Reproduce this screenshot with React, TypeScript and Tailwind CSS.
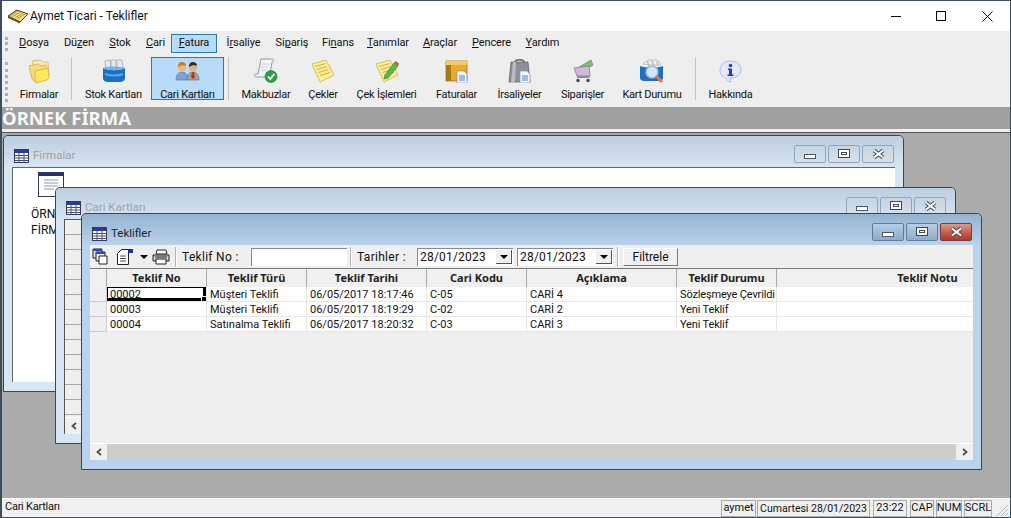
import type { ReactNode } from "react";

const menuItems: { pre: string; key: string; post: string; width: string; active?: boolean }[] = [
  { pre: "", key: "D", post: "osya", width: "w-[48px]" },
  { pre: "Dü", key: "z", post: "en", width: "w-[42px]" },
  { pre: "", key: "S", post: "tok", width: "w-[40px]" },
  { pre: "", key: "C", post: "ari", width: "w-[31px]" },
  { pre: "", key: "F", post: "atura", width: "w-[46px]", active: true },
  { pre: "İ", key: "r", post: "saliye", width: "w-[53px]" },
  { pre: "Si", key: "p", post: "ariş", width: "w-[44px]" },
  { pre: "Fi", key: "n", post: "ans", width: "w-[48px]" },
  { pre: "", key: "T", post: "anımlar", width: "w-[52px]" },
  { pre: "", key: "A", post: "raçlar", width: "w-[52px]" },
  { pre: "", key: "P", post: "encere", width: "w-[51px]" },
  { pre: "", key: "Y", post: "ardım", width: "w-[51px]" },
];

function FolderIcon() {
  return (
    <svg width="24" height="26" viewBox="0 0 24 26">
      <path d="M5 3l9-1 2 2 5 0 1 14-14 1z" fill="#fbe9a6" stroke="#c9b36a" strokeWidth=".7" />
      <path d="M2 8l9-2 2 2 6-1 2 14-13 3-3-3z" fill="#f8da7c" stroke="#c5a850" strokeWidth=".7" />
      <path d="M8 13l13-3 1 10-2 2-11 3-1-3z" fill="#fde95e" stroke="#c7a93a" strokeWidth=".7" />
    </svg>
  );
}

function StockIcon() {
  return (
    <svg width="24" height="24" viewBox="0 0 24 24">
      <path d="M3 2l5-1 1 8-5 1zM9 1h5v8H9zM15 1h5l1 8h-6z" fill="#e6eaf0" stroke="#98a2b2" strokeWidth=".7" />
      <path d="M1 9c5 3 17 3 22 0v10c0 3-3 4-5 4H6c-2 0-5-1-5-4z" fill="#1b6fc4" />
      <path d="M1 9c5-2 17-2 22 0-5 3-17 3-22 0z" fill="#74b4ea" />
      <path d="M3 15c5 2 13 2 18 0" stroke="#5ea5e5" strokeWidth="2" fill="none" />
    </svg>
  );
}

function PeopleIcon() {
  return (
    <svg width="25" height="20" viewBox="0 0 25 20">
      <path d="M1 19c0-6 3-8 6-8s6 2 6 8z" fill="#7da4d8" stroke="#4b70a5" strokeWidth=".6" />
      <circle cx="7" cy="6.500" r="4" fill="#eeb77e" />
      <path d="M3 6c0-4 2-5 4-5s4 1 4 4c-2-1-5-1-8 1z" fill="#c77a2c" />
      <path d="M12 19c0-6 3-8 6-8s6 2 6 8z" fill="#a0a39a" stroke="#6b6e66" strokeWidth=".6" />
      <path d="M17 11h2l1 5-2 2-2-2z" fill="#b5342c" />
      <circle cx="18" cy="6.500" r="4" fill="#e9b084" />
      <path d="M14 6c0-4 2-5 4-5s4 1 4 4c-2-1-5-1-8 1z" fill="#3c2c20" />
    </svg>
  );
}

function ReceiptIcon() {
  return (
    <svg width="24" height="26" viewBox="0 0 24 26">
      <path d="M7 1h11c2 0 2 3 0 3l-2 12c0 2-2 3-4 3H2c-2 0-2-3 0-3h2z" fill="#f2f3f6" stroke="#7d8391" strokeWidth=".8" />
      <path d="M8 6h7M7 9h7M7 12h6" stroke="#c2c6cf" strokeWidth=".8" />
      <circle cx="17" cy="18.500" r="6" fill="#2ba042" stroke="#1b6f2a" strokeWidth=".6" />
      <path d="M14 18.500l2.300 2.500 4-5" stroke="#fff" strokeWidth="1.800" fill="none" />
    </svg>
  );
}

function NoteIcon({ pencil }: { pencil?: boolean }) {
  return (
    <svg width="24" height="24" viewBox="0 0 24 24">
      <path d="M1 5l14-4 8 15-14 7z" fill="#fcee94" stroke="#d0b44a" strokeWidth=".8" />
      <path d="M4.500 7.500l10-3M6 10.500l10-3M7.500 13.500l10-3M9 16.500l10-3" stroke="#c8a93e" strokeWidth=".9" />
      {pencil && (
        <>
          <path d="M10 16L19 4l4 3-10 12-4 1z" fill="#58b947" stroke="#2c7b2c" strokeWidth=".6" />
          <path d="M19 4l1.500-2 3.500 2.500-1 2.500z" fill="#d9503f" />
        </>
      )}
    </svg>
  );
}

function DocOverlay() {
  return (
    <>
      <path d="M12 12h7l3 3v9H12z" fill="#f3f6fb" stroke="#7f93b5" strokeWidth=".7" />
      <path d="M14 16h6v6h-6z" fill="#9fbde2" />
    </>
  );
}

function InvoiceIcon() {
  return (
    <svg width="24" height="24" viewBox="0 0 24 24">
      <path d="M1 2h21v20H1z" fill="#e8a92e" stroke="#8f6414" strokeWidth=".7" />
      <path d="M1 2h21v4H1z" fill="#f6cc62" />
      <path d="M1 6h5v16H1z" fill="#a87718" />
      <DocOverlay />
    </svg>
  );
}

function BagIcon() {
  return (
    <svg width="24" height="24" viewBox="0 0 24 24">
      <path d="M7 3c0-3 9-3 9 0" stroke="#666" strokeWidth="1.500" fill="none" />
      <path d="M3 3h17l2 20H1z" fill="#8d8f92" stroke="#5a5c60" strokeWidth=".7" />
      <path d="M5 3h3l-1 20H3z" fill="#b9bbbe" />
      <DocOverlay />
    </svg>
  );
}

function CartIcon() {
  return (
    <svg width="22" height="24" viewBox="0 0 22 24">
      <path d="M7 8l12-7 2 5-10 6z" fill="#7fbf6a" stroke="#4b8a3f" strokeWidth=".6" />
      <path d="M2 9l15-2 1 10H5z" fill="#d9b7dc" stroke="#7d7f92" strokeWidth=".8" />
      <path d="M5 17h13l-1 2H5z" fill="#8b8f9c" />
      <circle cx="6" cy="21.500" r="1.800" fill="#4d505a" />
      <circle cx="16" cy="21.500" r="1.800" fill="#4d505a" />
    </svg>
  );
}

function CardSearchIcon() {
  return (
    <svg width="24" height="24" viewBox="0 0 24 24">
      <path d="M3 5l4-3 2 4zM8 1h4v5H8zM13 1h4v5h-4zM18 2l3 3-3 2z" fill="#eef0f4" stroke="#9aa3b2" strokeWidth=".6" />
      <path d="M0 7c6 2 17 2 23 0v12c0 2-2 3-4 3H4c-2 0-4-1-4-3z" fill="#1c6fc2" />
      <circle cx="12" cy="13" r="6" fill="#d3e6f7" stroke="#9fb6cc" strokeWidth="1.500" />
      <path d="M16 17l6 6" stroke="#e07b3b" strokeWidth="3" />
    </svg>
  );
}

function InfoIcon() {
  return (
    <svg width="23" height="23" viewBox="0 0 23 23">
      <path d="M11.500 1C5 1 1 5 1 10c0 4 2 7 6 8 1 2 2 4 5 4-1-1-1-3-1-4 6 0 11-3 11-8S18 1 11.500 1z" fill="#e3e8fb" stroke="#a3aee0" strokeWidth=".8" />
      <circle cx="11.500" cy="5.500" r="1.800" fill="#1f3fc0" />
      <path d="M9 8.500h4v6h1.500v1.500h-6v-1.500H10V10H9z" fill="#1f3fc0" />
    </svg>
  );
}

const toolbarItems: { label: string; width: string; icon: ReactNode; active?: boolean; sep?: boolean }[] = [
  { label: "Firmalar", width: "w-[56px]", icon: <FolderIcon />, sep: true },
  { label: "Stok Kartları", width: "w-[75px]", icon: <StockIcon /> },
  { label: "Cari Kartları", width: "w-[73px]", icon: <PeopleIcon />, active: true, sep: true },
  { label: "Makbuzlar", width: "w-[66px]", icon: <ReceiptIcon /> },
  { label: "Çekler", width: "w-[48px]", icon: <NoteIcon /> },
  { label: "Çek İşlemleri", width: "w-[79px]", icon: <NoteIcon pencil /> },
  { label: "Faturalar", width: "w-[61px]", icon: <InvoiceIcon /> },
  { label: "İrsaliyeler", width: "w-[65px]", icon: <BagIcon /> },
  { label: "Siparişler", width: "w-[61px]", icon: <CartIcon /> },
  { label: "Kart Durumu", width: "w-[78px]", icon: <CardSearchIcon />, sep: true },
  { label: "Hakkında", width: "w-[61px]", icon: <InfoIcon /> },
];

const columns = [
  { title: "Teklif No", width: "w-[100px]" },
  { title: "Teklif Türü", width: "w-[100px]" },
  { title: "Teklif Tarihi", width: "w-[120px]" },
  { title: "Cari Kodu", width: "w-[100px]" },
  { title: "Açıklama", width: "w-[150px]" },
  { title: "Teklif Durumu", width: "w-[100px] tracking-[-0.15px]" },
  { title: "Teklif Notu", width: "w-[302px]" },
];

const rows = [
  ["00002", "Müşteri Teklifi", "06/05/2017 18:17:46", "C-05", "CARİ 4", "Sözleşmeye Çevrildi", ""],
  ["00003", "Müşteri Teklifi", "06/05/2017 18:19:29", "C-02", "CARİ 2", "Yeni Teklif", ""],
  ["00004", "Satınalma Teklifi", "06/05/2017 18:20:32", "C-03", "CARİ 3", "Yeni Teklif", ""],
];

function TableIcon() {
  return (
    <svg width="15" height="14" viewBox="0 0 15 14" className="shrink-0">
      <rect x=".5" y=".5" width="14" height="13" fill="#fff" stroke="#33395c" />
      <rect x="1" y="1" width="13" height="3" fill="#2a3a9c" />
      <path d="M1 6.500h13M1 9h13M1 11.500h13M5 4v9M10 4v9" stroke="#4a5070" strokeWidth="1" />
    </svg>
  );
}

function CaptionButton({ kind, active }: { kind: "min" | "max" | "close"; active?: boolean }) {
  const red = active && kind === "close";
  return (
    <div
      className={`flex h-[18px] w-[32px] items-center justify-center rounded-[2px] border ${
        red
          ? "border-[#7c3a34] bg-gradient-to-b from-[#dc9a8c] via-[#c9604f] to-[#ad3a2c]"
          : active
            ? "border-[#5f7d9c] bg-gradient-to-b from-[#b7cde4] to-[#8fabc9]"
            : "border-[#8fa6bc] bg-gradient-to-b from-[#c4d4e3] to-[#d5e1ec]"
      }`}
    >
      {kind === "min" && <div className="mt-[5px] h-[5px] w-[12px] border border-[#4b5563] bg-white" />}
      {kind === "max" && (
        <div className="flex h-[9px] w-[12px] items-center justify-center border border-[#3c4654] bg-white">
          <div className="h-[3px] w-[6px] border border-[#3c4654]" />
        </div>
      )}
      {kind === "close" && (
        <svg width="13" height="10" viewBox="0 0 13 10">
          <path d="M2 1.500l9 7M11 1.500l-9 7" stroke="#3c4654" strokeWidth="4" />
          <path d="M2 1.500l9 7M11 1.500l-9 7" stroke="#fff" strokeWidth="2.200" />
        </svg>
      )}
    </div>
  );
}

function MdiWindow({
  title,
  position,
  active,
  children,
}: {
  title: string;
  position: string;
  active?: boolean;
  children: ReactNode;
}) {
  return (
    <div
      className={`absolute flex h-[257px] w-[901px] flex-col rounded-t-[5px] border border-[#37474f] ${position} ${
        active ? "bg-[#b9d3ee]" : "bg-[#d8e5f3]"
      }`}
    >
      <div
        className={`flex h-[31px] shrink-0 items-center gap-[4px] rounded-t-[5px] pl-[10px] pr-[9px] pt-[8px] ${
          active
            ? "bg-gradient-to-b from-[#95b3d1] to-[#b9d2ec]"
            : "bg-gradient-to-b from-[#bccede] to-[#d8e4f1]"
        }`}
      >
        <TableIcon />
        <span className={`text-[11.500px] ${active ? "text-[#1a2530]" : "text-[#9aa3ad]"}`}>{title}</span>
        <div className="ml-auto mt-[-4px] flex gap-[2px]">
          <CaptionButton kind="min" active={active} />
          <CaptionButton kind="max" active={active} />
          <CaptionButton kind="close" active={active} />
        </div>
      </div>
      <div className="mx-[8px] mb-[9px] flex min-h-0 flex-1 flex-col overflow-hidden">{children}</div>
    </div>
  );
}

function ScrollBar({ thumb }: { thumb?: boolean }) {
  return (
    <div className="mt-auto flex h-[17px] shrink-0 items-center border-t border-white bg-[#f0f0f0]">
      <div className="flex w-[17px] shrink-0 items-center justify-center">
        <svg width="8" height="8" viewBox="0 0 8 8">
          <path d="M6 1L2.500 4 6 7" stroke="#505050" strokeWidth="1.800" fill="none" />
        </svg>
      </div>
      <div className={`h-full flex-1 ${thumb ? "bg-[#cdcdcd]" : "bg-[#f0f0f0]"}`} />
      <div className="flex w-[17px] shrink-0 items-center justify-center">
        <svg width="8" height="8" viewBox="0 0 8 8">
          <path d="M2 1l3.500 3L2 7" stroke="#505050" strokeWidth="1.800" fill="none" />
        </svg>
      </div>
    </div>
  );
}

function DateBox() {
  return (
    <div className="flex h-[18px] w-[96px] items-center justify-between border-l border-t border-[#8a8a8a] bg-white pl-[2px] pr-[1px] text-[12px] tracking-[0.2px]">
      <span>28/01/2023</span>
      <div className="flex h-[14px] w-[16px] items-center justify-center border-b border-r border-[#555] bg-[#f0f0f0]">
        <div className="h-0 w-0 border-x-[4px] border-t-[4px] border-x-transparent border-t-black" />
      </div>
    </div>
  );
}

function ToolSep({ className }: { className: string }) {
  return <div className={`h-[20px] w-[2px] shrink-0 border-l border-r border-l-[#b5b5b5] border-r-white ${className}`} />;
}

export default function App() {
  return (
    <div className="flex h-[518px] w-[1011px] flex-col overflow-hidden border-b border-l-2 border-r border-t border-[#39505c] bg-[#f0f0f0] font-['Roboto',sans-serif] text-[11px] text-[#111]">
      <div className="flex h-[30px] shrink-0 items-center bg-white">
        <svg width="22" height="16" viewBox="0 0 22 16" className="ml-[5px]">
          <path d="M1 8l9-6 11 4-8 8z" fill="#f3df80" stroke="#3a3a20" strokeWidth="1" />
          <path d="M3 8l8-5M5 9l8-5M8 10l8-5M10 11l8-5" stroke="#8a7a30" strokeWidth=".7" />
          <path d="M1 8l12 6v1.500L1 10z" fill="#55502a" />
        </svg>
        <span className="ml-[1px] text-[12px]">Aymet Ticari - Teklifler</span>
        <div className="ml-auto flex items-center">
          <div className="mr-[35px] h-px w-[10px] bg-black" />
          <div className="mr-[36px] h-[10px] w-[10px] border border-black" />
          <svg width="11" height="11" viewBox="0 0 11 11" className="mr-[17px]">
            <path d="M.5.500l10 10M10.500.500l-10 10" stroke="#000" strokeWidth="1" />
          </svg>
        </div>
      </div>

      <div className="flex h-[22px] shrink-0 items-center bg-[#eeeeee] pl-[3px] pt-[3px]">
        <div className="h-[14px] border-l-[3px] border-dotted border-[#b0b0b0]" />
        <div className="ml-[2px] flex items-center">
          {menuItems.map((item) => (
            <div
              key={item.key + item.post}
              className={`flex h-[19px] items-center justify-center text-[11px] tracking-[-0.1px] ${item.width} ${
                item.active ? "border border-[#2a78b5] bg-[#b7dbf8]" : ""
              }`}
            >
              <span>
                {item.pre}
                <span className="underline">{item.key}</span>
                {item.post}
              </span>
            </div>
          ))}
        </div>
      </div>

      <div className="flex h-[54px] shrink-0 items-start bg-[#eeeeee] pl-[3px] pt-[4px]">
        <div className="h-[40px] self-center border-l-[3px] border-dotted border-[#b0b0b0]" />
        <div className="ml-[3px] flex items-center">
          {toolbarItems.map((item) => (
            <div key={item.label} className="flex items-center">
              <div
                className={`flex h-[43px] flex-col items-center border ${item.width} ${
                  item.active ? "border-[#2a78b5] bg-[#b7dbf8]" : "border-transparent"
                }`}
              >
                <div className="flex h-[26px] shrink-0 items-center justify-center">{item.icon}</div>
                <span className="mt-[2px] shrink-0 translate-y-[2px] whitespace-nowrap text-[11px] leading-[14px] tracking-[-0.25px]">{item.label}</span>
              </div>
              {item.sep && <div className="mx-[4px] h-[43px] w-px bg-[#c4c4c4]" />}
            </div>
          ))}
        </div>
      </div>

      <div className="flex h-[22px] shrink-0 items-center bg-[#a0a0a0] font-['Noto_Sans',sans-serif] text-[18.500px] font-bold leading-none text-[#f8f8f8]">
        ÖRNEK FİRMA
      </div>
      <div className="h-[4px] shrink-0 border-b border-[#555] bg-[#f0f0f0]" />

      <div className="relative flex-1 overflow-hidden bg-[#ababab]">
        <MdiWindow title="Firmalar" position="left-[1px] top-[2px]">
          <div className="flex flex-1 flex-col border-l border-t border-[#666] bg-white pl-[18px] pt-[4px] text-[12px] leading-[16px]">
            <svg width="26" height="25" viewBox="0 0 26 25" className="ml-[7px]">
              <rect x=".5" y=".5" width="25" height="24" fill="#fff" stroke="#33395c" />
              <rect x="1" y="1" width="24" height="3" fill="#1f2f86" />
              <path d="M6 8h14M6 11h14M6 14h14M6 17h10" stroke="#9096a6" strokeWidth="1" />
            </svg>
            <div className="mt-[9px]">ÖRNEK</div>
            <div>FİRMA</div>
          </div>
        </MdiWindow>

        <MdiWindow title="Cari Kartları" position="left-[53px] top-[54px]">
          <div className="flex flex-1 flex-col border-l border-t border-[#555] bg-[#efefef]">
            <div className="w-[17px] flex-1 bg-[repeating-linear-gradient(to_bottom,#efefef_0px,#efefef_14px,#a8a8a8_14px,#a8a8a8_15px)]" />
            <ScrollBar />
          </div>
        </MdiWindow>

        <MdiWindow title="Teklifler" position="left-[79px] top-[80px]" active>
          <div className="flex h-[23px] shrink-0 items-center bg-[#efefef]">
            <svg width="16" height="17" viewBox="0 0 16 17" className="ml-[2px]">
              <path d="M1 1h9v9H1z" fill="#dbe4ff" stroke="#222" />
              <path d="M1 1h9v2H1z" fill="#3347b5" />
              <path d="M4 4h9v9H4z" fill="#eef" stroke="#222" />
              <path d="M4 4h9v2H4z" fill="#3347b5" />
              <path d="M7 8h8v8H7z" fill="#fff" stroke="#222" />
            </svg>
            <svg width="18" height="17" viewBox="0 0 18 17" className="ml-[8px]">
              <path d="M1.500 5.500l4-4h7v15h-11z" fill="#fff" stroke="#222" />
              <path d="M4 8h6M4 10.500h6M4 13h6" stroke="#555" />
              <path d="M12 1h5v4h-5z" fill="#1e2d8f" />
            </svg>
            <div className="ml-[6px] h-0 w-0 border-x-[4px] border-t-[4px] border-x-transparent border-t-black" />
            <svg width="18" height="16" viewBox="0 0 18 16" className="ml-[4px]">
              <path d="M5 1h9l1 4H4z" fill="#fff" stroke="#222" />
              <path d="M1 6h16v6H1z" fill="#cfcfcf" stroke="#222" />
              <path d="M4 10h10v5H4z" fill="#fff" stroke="#222" />
              <path d="M3 8h12" stroke="#222" />
            </svg>
            <ToolSep className="ml-[5px]" />
            <span className="ml-[5px] w-[69px] text-[12px] tracking-[0.3px]">Teklif No :</span>
            <div className="h-[18px] w-[96px] border-l border-t border-[#8a8a8a] bg-white" />
            <ToolSep className="ml-[3px]" />
            <span className="ml-[5px] w-[60px] text-[12px] tracking-[0.3px]">Tarihler :</span>
            <DateBox />
            <div className="w-[4px]" />
            <DateBox />
            <ToolSep className="ml-[4px]" />
            <div className="ml-[4px] flex h-[18px] w-[55px] items-center justify-center border border-b-[#777] border-l-white border-r-[#777] border-t-white bg-[#f0f0f0] text-[12px]">
              Filtrele
            </div>
          </div>

          <div className="flex min-h-0 flex-1 flex-col overflow-hidden border-t border-[#777] bg-[#efefef]">
            <div className="flex h-[18px] shrink-0 bg-[#f0f0f0]">
              <div className="w-[17px] shrink-0 border-r border-[#aaa]" />
              {columns.map((col) => (
                <div
                  key={col.title}
                  className={`flex shrink-0 items-center justify-center border-r border-[#aaa] font-['Noto_Sans',sans-serif] font-bold text-[#222] ${col.width}`}
                >
                  {col.title}
                </div>
              ))}
            </div>
            {rows.map((row, rowIdx) => (
              <div key={row[0]} className="flex h-[15px] shrink-0 bg-white">
                <div className="w-[17px] shrink-0 border-b border-r border-[#ccc] bg-[#efefef]" />
                {row.map((cell, cellIdx) => (
                  <div
                    key={cellIdx}
                    className={`relative flex shrink-0 items-center overflow-hidden whitespace-nowrap border-b border-r border-[#e6e6e6] pl-[3px] text-[11px] leading-none ${columns[cellIdx].width}`}
                  >
                    {cell}
                    {rowIdx === 0 && cellIdx === 0 && (
                      <div className="absolute inset-0 border-b-[3px] border-l border-r-[3px] border-t border-black">
                        <div className="absolute bottom-[-3px] right-[-3px] h-[5px] w-[5px] border-l border-t border-white bg-black" />
                      </div>
                    )}
                  </div>
                ))}
              </div>
            ))}
            <ScrollBar thumb />
          </div>
        </MdiWindow>
      </div>

      <div className="flex h-[19px] shrink-0 items-end border-t border-white bg-[#f0f0f0] text-[11px]">
        <span className="mb-[2px] ml-[3px] tracking-[-0.25px]">Cari Kartları</span>
        <div className="ml-auto flex items-end gap-[1px] whitespace-nowrap">
          <div className="flex h-[17px] w-[35px] items-center justify-center border border-[#aaa]">aymet</div>
          <div className="flex h-[17px] w-[113px] items-center justify-center border border-[#aaa] text-[10.500px]">Cumartesi 28/01/2023</div>
          <div className="ml-[2px] flex h-[17px] w-[34px] items-center justify-center border border-[#aaa]">23:22</div>
          <div className="ml-[2px] flex h-[17px] w-[24px] items-center justify-center border border-[#aaa]">CAP</div>
          <div className="ml-[1px] flex h-[17px] w-[26px] items-center justify-center border border-[#aaa]">NUM</div>
          <div className="ml-[1px] flex h-[17px] w-[28px] items-center justify-center border border-[#aaa]">SCRL</div>
          <svg width="17" height="16" viewBox="0 0 17 16">
            <path d="M15 4L4 15M15 8l-7 7M15 12l-3 3" stroke="#b5b5b5" strokeWidth="1" />
          </svg>
        </div>
      </div>
    </div>
  );
}
